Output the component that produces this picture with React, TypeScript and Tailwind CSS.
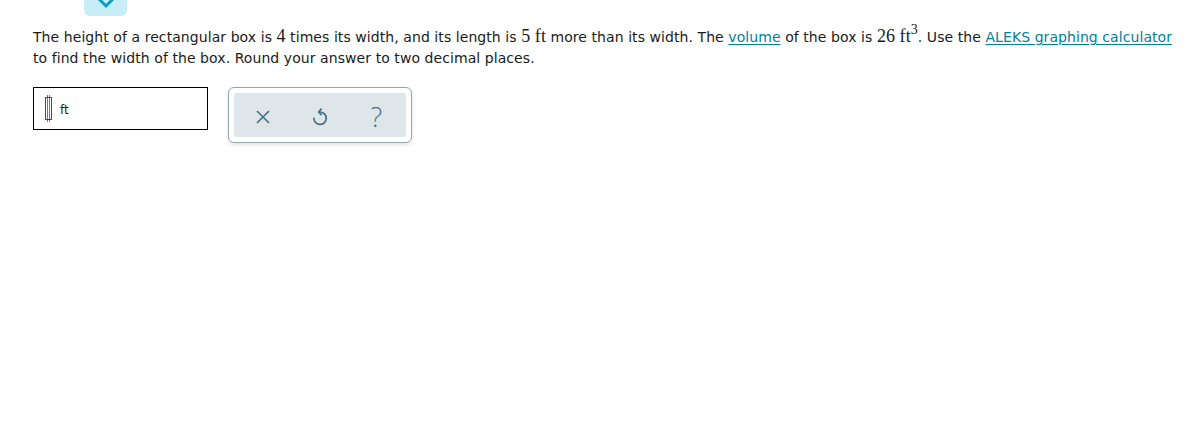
import React from 'react';

const Link = ({ children }: { children: React.ReactNode }) => (
  <a href="#" className="text-[#00819e] underline underline-offset-2">
    {children}
  </a>
);

const Num = ({ children }: { children: React.ReactNode }) => (
  <span className="font-[Liberation_Serif,serif] text-[18px]">{children}</span>
);

const App: React.FC = () => {
  return (
    <div className="relative w-[1195px] h-[422px] bg-white font-[DejaVu_Sans,Verdana,sans-serif] text-[14px] text-[#1a1a1a]">
      {/* collapse tab */}
      <div className="absolute left-[84px] top-0 w-[43px] h-[16px] rounded-b-[6px] bg-[#c7eef7] flex justify-center">
        <svg width="20" height="12" viewBox="0 0 20 12" className="-mt-[3px]">
          <path d="M3 2 L10 9 L17 2" fill="none" stroke="#0a9fc2" strokeWidth="3" />
        </svg>
      </div>

      <div className="pt-[26px] pl-[33px] leading-[21px] tracking-[0.07px]">
        <p className="w-[1150px]">
          The height of a rectangular box is <Num>4</Num> times its width, and its length is <Num>5 ft</Num> more
          than its width. The <Link>volume</Link> of the box is{' '}
          <Num>
            26 ft<sup className="text-[14px] -top-[0.55em]">3</sup>
          </Num>
          . Use the <Link>ALEKS graphing calculator</Link> to find the width of the box. Round your answer to two
          decimal places.
        </p>

        <div className="mt-[18px] flex items-start">
          <div className="w-[175px] h-[43px] border border-black flex items-center pl-[10px]">
            <div className="relative w-[7px] h-[23px] border border-[#3b36f5] ml-[1px]">
              <div className="absolute left-[1px] top-[-3px] w-[3px] h-[27px] border-l border-r border-[#222] opacity-60" />
            </div>
            <span className="ml-[8px] mt-[3px] text-[12px]">ft</span>
          </div>

          <div className="ml-[20px] w-[184px] h-[56px] rounded-[6px] border border-[#8ea9b1] bg-white p-[5px] shadow-[0_2px_4px_rgba(0,0,0,0.12)]">
            <div className="w-full h-full rounded-[3px] bg-[#dfe6e9] grid grid-cols-[57px_57px_57px] items-center justify-items-center">
              <svg width="16" height="16" viewBox="0 0 16 16" className="mt-[4px]">
                <path d="M2 2 L14 14 M14 2 L2 14" stroke="#46707e" strokeWidth="1.6" fill="none" />
              </svg>
              <svg width="16" height="20" viewBox="0 0 16 20" className="mt-[4px]">
                <path d="M8 5 A6.2 6.2 0 1 1 1.9 10.6" stroke="#46707e" strokeWidth="1.7" fill="none" />
                <path d="M9.6 1.6 L6.6 5 L9.6 8.2" stroke="#46707e" strokeWidth="1.7" fill="none" />
              </svg>
              <span className="mt-[2px] text-[27px] font-[Open_Sans,sans-serif] font-light leading-none text-[#46707e]">
                ?
              </span>
            </div>
          </div>
        </div>
      </div>
    </div>
  );
};

export default App;
